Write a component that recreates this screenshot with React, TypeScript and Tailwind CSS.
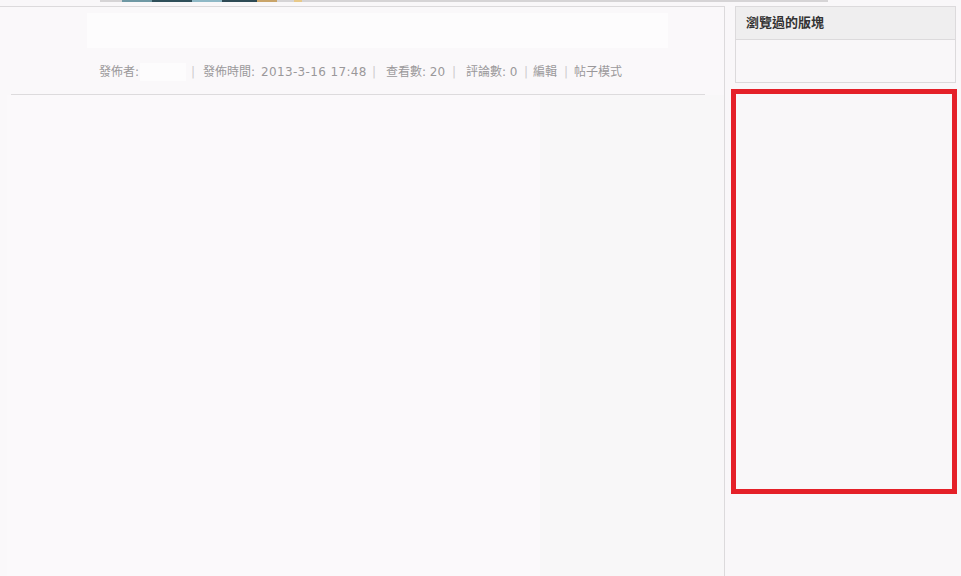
import React from "react";

export default function App() {
  const font = { fontFamily: '"DejaVu Sans", "Noto Sans CJK TC", sans-serif' };
  const Sep = () => <span className="w-[4px] shrink-0 text-center text-[#cdcbcd]">|</span>;
  return (
    <div className="w-[961px] h-[576px] overflow-hidden bg-[#f9f7f9]" style={font}>
      {/* top strip */}
      <div className="h-[6px]">
        <div className="ml-[100px] w-[728px] h-[2px] bg-[#d6d4d6] flex">
          <div className="ml-[22px] w-[30px] h-[2px] bg-[#6f98a4]" />
          <div className="w-[40px] h-[2px] bg-[#2f4f5a]" />
          <div className="w-[30px] h-[2px] bg-[#8fb8c6]" />
          <div className="w-[35px] h-[2px] bg-[#2e4a55]" />
          <div className="w-[20px] h-[2px] bg-[#c9a46a]" />
          <div className="ml-[17px] w-[8px] h-[2px] bg-[#e8c98a]" />
        </div>
      </div>
      <div className="flex">
        {/* main column */}
        <div className="w-[725px] h-[570px] border-t border-r border-[#dcdadc] bg-[#faf8fa] flex flex-col">
          <div className="ml-[87px] mt-[6px] w-[581px] h-[35px] bg-[#fdfcfd]" />
          <div className="mt-[15px] ml-[99px] h-[18px] flex items-center text-[12px] leading-[18px] text-[#9a989a] whitespace-nowrap">
            <span className="w-[41px] shrink-0">發佈者:</span>
            <span className="w-[46px] h-[18px] shrink-0 bg-[#fdfcfd]" />
            <span className="w-[5px] shrink-0" />
            <Sep />
            <span className="w-[8px] shrink-0" />
            <span className="w-[58px] shrink-0">發佈時間:</span>
            <span className="w-[111px] shrink-0 tracking-[0.35px]">2013-3-16 17:48</span>
            <Sep />
            <span className="w-[10px] shrink-0" />
            <span className="w-[66px] shrink-0">查看數: 20</span>
            <Sep />
            <span className="w-[10px] shrink-0" />
            <span className="w-[58px] shrink-0">評論數: 0</span>
            <Sep />
            <span className="w-[5px] shrink-0" />
            <span className="w-[31px] shrink-0">編輯</span>
            <Sep />
            <span className="w-[6px] shrink-0" />
            <span className="shrink-0">帖子模式</span>
          </div>
          <div className="mt-[13px] ml-[11px] w-[694px] h-[1px] bg-[#dddbdd]" />
          <div className="flex flex-1">
            <div className="ml-[7px] w-[533px] bg-[#fbf9fb]" />
            <div className="flex-1 bg-[#f8f7f8]" />
          </div>
        </div>
        {/* sidebar */}
        <div className="ml-[6px] w-[226px] flex flex-col">
          <div className="ml-[4px] w-[221px] h-[77px] border border-[#dcdadc] bg-[#f9f7f9] flex flex-col">
            <div className="h-[33px] bg-[#efeeef] border-b border-[#dcdadc] pl-[10px] flex items-center text-[13px] font-bold text-[#333333]">
              瀏覽過的版塊
            </div>
            <div className="flex-1" />
          </div>
          <div className="mt-[6px] w-[226px] h-[405px] border-[5px] border-[#e52029] bg-[#f9f7f9]" />
        </div>
      </div>
    </div>
  );
}
